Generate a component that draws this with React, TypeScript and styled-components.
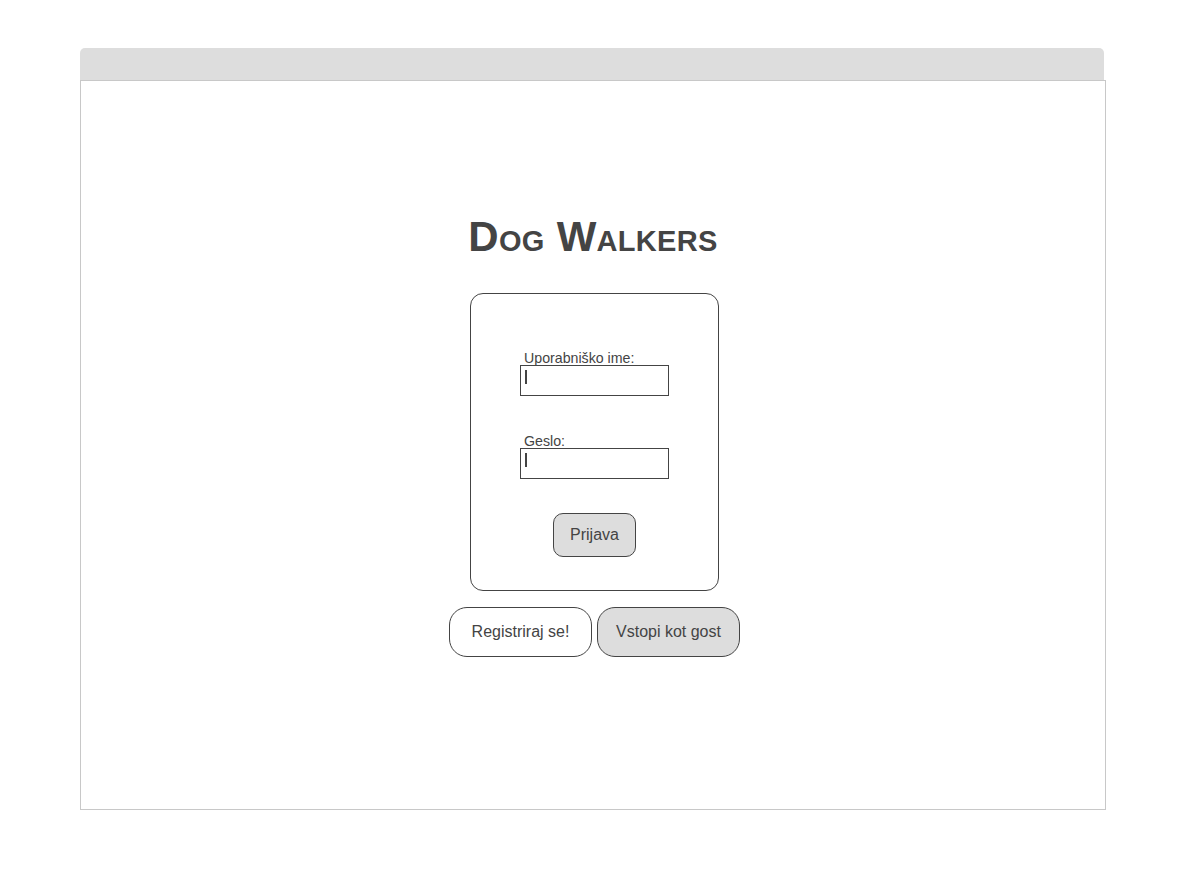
import React from "react";
import styled, { createGlobalStyle } from "styled-components";

const GlobalStyle = createGlobalStyle`
  html, body {
    margin: 0;
    padding: 0;
    background: #ffffff;
    font-family: "Liberation Sans", Arial, sans-serif;
  }
`;

const Page = styled.div`
  padding: 48px 0 0 80px;
  width: 1026px;
`;

const TopBar = styled.div`
  width: 1024px;
  height: 32px;
  background: #dddddd;
  border-radius: 5px 5px 0 0;
`;

const Panel = styled.div`
  box-sizing: border-box;
  width: 1026px;
  height: 730px;
  border: 1px solid #c8c8c8;
  display: flex;
  flex-direction: column;
  align-items: center;
  padding-top: 132px;
  padding-left: 3px;
`;

const Title = styled.h1`
  margin: 0 3px 0 0;
  font-size: 42px;
  line-height: 48px;
  letter-spacing: 0.3px;
  font-weight: bold;
  font-variant: small-caps;
  color: #444444;
  font-family: "Liberation Sans", Arial, sans-serif;
`;

const Card = styled.div`
  box-sizing: border-box;
  margin-top: 32px;
  width: 249px;
  height: 298px;
  border: 1px solid #444444;
  border-radius: 13px;
  display: flex;
  flex-direction: column;
  align-items: center;
  padding-top: 57px;
`;

const Field = styled.div<{ $gap?: number }>`
  display: flex;
  flex-direction: column;
  width: 149px;
  margin-top: ${(p) => p.$gap ?? 0}px;
`;

const Label = styled.label`
  font-size: 14.2px;
  line-height: 14px;
  color: #444444;
  padding-left: 4px;
`;

const InputBox = styled.div`
  box-sizing: border-box;
  width: 149px;
  height: 31px;
  border: 1px solid #444444;
  background: #ffffff;
  padding: 4px 0 0 4px;
`;

const Caret = styled.span`
  display: block;
  width: 2px;
  height: 14px;
  background: #444444;
`;

const Button = styled.button<{ $filled?: boolean; $w: number; $h: number; $r: number }>`
  box-sizing: border-box;
  width: ${(p) => p.$w}px;
  height: ${(p) => p.$h}px;
  border: 1px solid #444444;
  border-radius: ${(p) => p.$r}px;
  background: ${(p) => (p.$filled ? "#dddddd" : "#ffffff")};
  color: #444444;
  font-family: "Liberation Sans", Arial, sans-serif;
  font-size: 16px;
  padding: 0;
  cursor: pointer;
`;

const SubmitRow = styled.div`
  margin-top: 34px;
  display: flex;
  justify-content: center;
`;

const ButtonRow = styled.div`
  margin-top: 16px;
  display: flex;
  gap: 5px;
`;

export default function App() {
  return (
    <>
      <GlobalStyle />
      <Page>
        <TopBar />
        <Panel>
          <Title>Dog Walkers</Title>
          <Card>
            <Field>
              <Label>Uporabniško ime:</Label>
              <InputBox>
                <Caret />
              </InputBox>
            </Field>
            <Field $gap={38}>
              <Label>Geslo:</Label>
              <InputBox>
                <Caret />
              </InputBox>
            </Field>
            <SubmitRow>
              <Button $filled $w={83} $h={44} $r={10}>
                Prijava
              </Button>
            </SubmitRow>
          </Card>
          <ButtonRow>
            <Button $w={143} $h={50} $r={18}>
              Registriraj se!
            </Button>
            <Button $filled $w={143} $h={50} $r={18}>
              Vstopi kot gost
            </Button>
          </ButtonRow>
        </Panel>
      </Page>
    </>
  );
}
